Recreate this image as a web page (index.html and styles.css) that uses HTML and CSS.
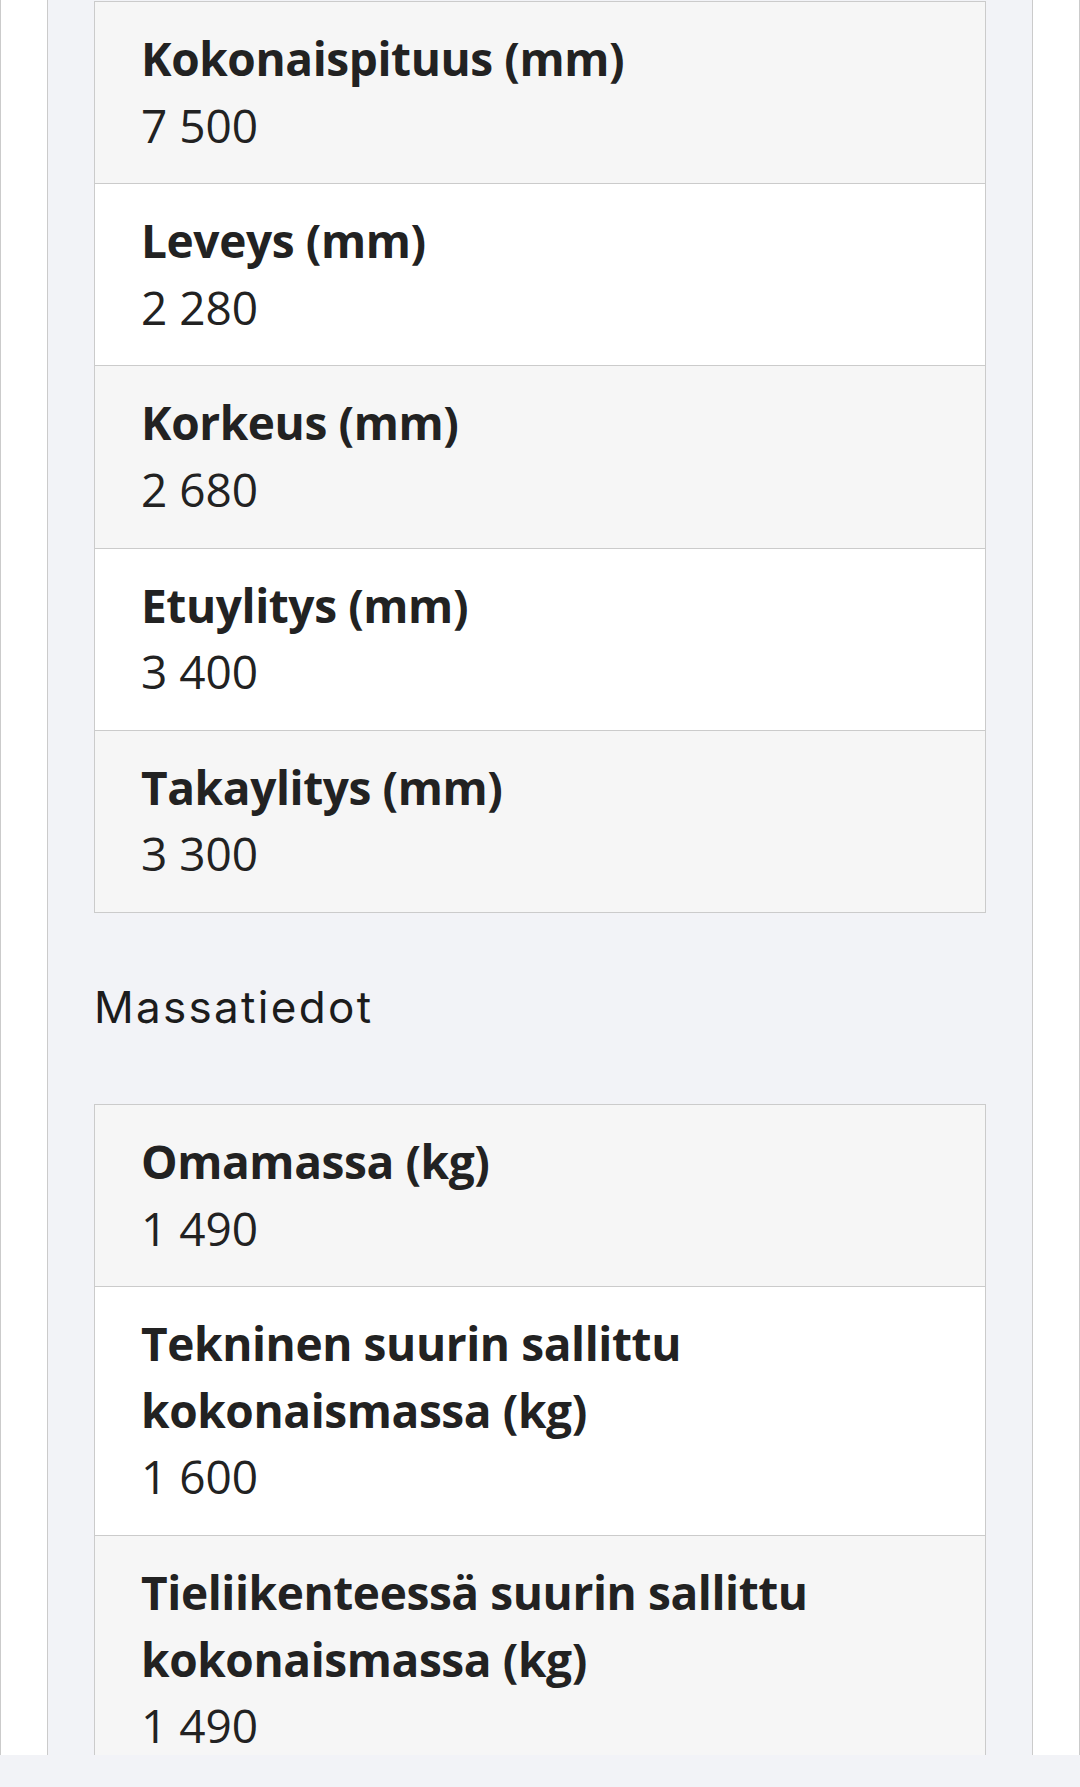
FILE: index.html
```html
<!DOCTYPE html>
<html lang="fi">
<head>
    <meta charset="UTF-8">
    <meta name="viewport" content="width=device-width, initial-scale=1.0">
    <title>Ajoneuvon tiedot</title>
    <link rel="stylesheet" href="styles.css">
</head>
<body>
    <div class="screen">
        <div class="panel">
            <!-- Mittatiedot -->
            <dl class="spec">
                <div class="spec-row">
                    <dt>Kokonaispituus (mm)</dt>
                    <dd>7&nbsp;500</dd>
                </div>
                <div class="spec-row">
                    <dt>Leveys (mm)</dt>
                    <dd>2&nbsp;280</dd>
                </div>
                <div class="spec-row">
                    <dt>Korkeus (mm)</dt>
                    <dd>2&nbsp;680</dd>
                </div>
                <div class="spec-row">
                    <dt>Etuylitys (mm)</dt>
                    <dd>3&nbsp;400</dd>
                </div>
                <div class="spec-row">
                    <dt>Takaylitys (mm)</dt>
                    <dd>3&nbsp;300</dd>
                </div>
            </dl>

            <h2 class="section-title">Massatiedot</h2>

            <dl class="spec">
                <div class="spec-row">
                    <dt>Omamassa (kg)</dt>
                    <dd>1&nbsp;490</dd>
                </div>
                <div class="spec-row">
                    <dt>Tekninen suurin sallittu kokonaismassa (kg)</dt>
                    <dd>1&nbsp;600</dd>
                </div>
                <div class="spec-row">
                    <dt>Tieliikenteessä suurin sallittu kokonaismassa (kg)</dt>
                    <dd>1&nbsp;490</dd>
                </div>
            </dl>
        </div>
    </div>
    <div class="bottom-bar"></div>
</body>
</html>
```

FILE: styles.css
```css
body {
    margin: 0;
    background: #f2f3f7;
    color: #222;
    font-family: "Open Sans", Arial, sans-serif;
}
.screen {
    height: 1755px;
    overflow: hidden;
    background: #fff;
    border-left: 1px solid #cbcbcb;
    border-right: 1px solid #cbcbcb;
    padding: 0 46px;
}
.panel {
    min-height: 100%;
    background: #f2f3f7;
    border-left: 1px solid #cbcbcb;
    border-right: 1px solid #cbcbcb;
    padding: 1px 46px 0;
}
.spec {
    margin: 0;
    border: 1px solid #cbcbcb;
    border-bottom: none;
}
.spec-row {
    padding: 23px 46px 25px;
    border-bottom: 1px solid #cbcbcb;
    font-size: 46px;
    line-height: 66.6px;
}
.spec-row:nth-child(odd) {
    background: #f6f6f6;
}
.spec-row:nth-child(even) {
    background: #fff;
}
.spec-row dt {
    font-weight: 700;
    letter-spacing: -0.4px;
}
.spec-row dd {
    margin: 0;
    font-weight: 400;
}
.section-title {
    margin: 64px 0 67px;
    font-family: Inter, "Noto Sans", sans-serif;
    font-weight: 400;
    font-size: 44px;
    line-height: 60px;
    letter-spacing: 2.3px;
    color: #1c1c1c;
}
.bottom-bar {
    height: 32px;
    background: #f2f3f7;
}
```
